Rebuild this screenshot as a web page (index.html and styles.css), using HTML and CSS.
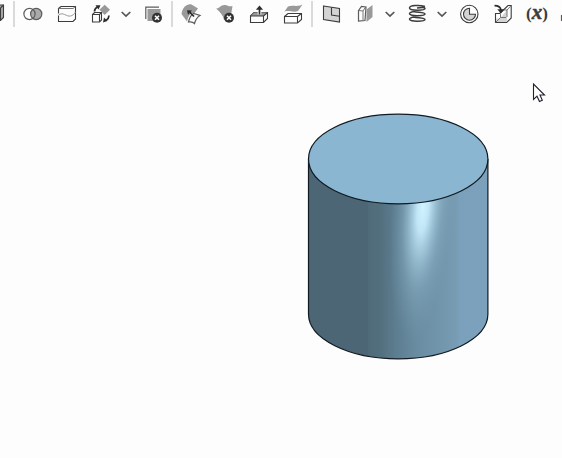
FILE: index.html
```
<!DOCTYPE html>
<html lang="en">
  <head>
    <meta charset="UTF-8" />
    <meta name="viewport" content="width=device-width, initial-scale=1.0" />
    <title>Part Studio</title>
    <link rel="stylesheet" href="styles.css">
  </head>
  <body>
    <div class="toolbar">
      <svg class="icon" viewBox="0 0 34 28">
        <path class="mid line" d="M10 8l3-3h12.500v12.500l-3 3H10z" />
        <path class="line none" d="M22.500 20.500V8l3-3" />
      </svg>
      <span class="separator"></span>
      <!-- boolean -->
      <svg class="icon" viewBox="0 0 34 28">
        <circle class="mid" cx="20.200" cy="14" r="5.800" />
        <circle class="soft none" cx="13.500" cy="14" r="5.600" />
        <circle class="soft none" cx="20.200" cy="14" r="5.600" />
      </svg>
      <!-- split -->
      <svg class="icon" viewBox="0 0 34 28">
        <path class="line white" d="M8.500 8.500l2.500-2h14.500v12.500l-2.500 2.500H8.500z" />
        <path class="soft-thin none" d="M8.500 8.500H23l2.500-2" />
        <path class="white" d="M22.300 9h1.400v4h-1.400zM7.700 13.500h1.600v2H7.700z" />
        <path class="pale" d="M8.500 15c4.500-3.500 8 2 12 1 2-.500 3.500-1.500 5-4" />
      </svg>
      <!-- transform -->
      <svg class="icon" viewBox="0 0 34 28">
        <path class="line white" d="M8.500 14.500l2-2h7v7.500l-2 2h-7z" />
        <path class="line none" d="M8.500 14.500h7v7.500M15.500 14.500l2-2" />
        <path class="gray" d="M20.700 4.700l5.300 5-5.300 5.300-5.300-5.300z" />
        <path class="dark none" d="M10.500 11.500c0-2 1-3.500 3-4.500M25 15.500c0 2-1 3.500-3 5" />
        <path class="black" d="M11.500 5.200h5l-2 4.300zM19 22.500l1-5 3.300 3.500z" />
      </svg>
      <svg class="chevron" viewBox="0 0 18 28"><path d="M3.700 12l4.300 4 4.300-4" /></svg>
      <!-- delete part -->
      <svg class="icon" viewBox="0 0 34 28">
        <path class="soft none" d="M9.800 19V7.200H23" />
        <path class="gray" d="M11.500 9H24.500v12H11.500z" />
        <circle class="badge" cx="21" cy="17.700" r="5" />
        <path class="cross" d="M19 15.700l4 4M23 15.700l-4 4" />
      </svg>
      <span class="separator"></span>
      <!-- modify fillet -->
      <svg class="icon" viewBox="0 0 34 28">
        <path class="gray" d="M7.500 14C8.500 7 13 3.500 17.500 4.500L24 8.500l-3.500 4.500c-5 0-6 3-7.500 8.500z" />
        <path class="soft white" d="M14.500 22c1-4.500 2.500-7 5-8.500l6.500 2c-2.500 1.500-4.500 4-5.500 8-1.500-1.500-3.500-2-6-1.500z" />
        <path class="dark none" d="M20 16.500l-4.500-4.500" />
        <path class="black" d="M13 10.200l5 .300-4 4.200z" />
      </svg>
      <!-- delete face -->
      <svg class="icon" viewBox="0 0 34 28">
        <path class="gray" d="M8 8.500c3.500 0 5-4 9-3.500 3 .500 4 2 7.500 1L23 15l-7 5c-1-5-4-8-8-11.500z" />
        <circle class="badge" cx="21" cy="17.700" r="5" />
        <path class="cross" d="M19 15.700l4 4M23 15.700l-4 4" />
      </svg>
      <!-- move face -->
      <svg class="icon" viewBox="0 0 34 28">
        <path class="line white" d="M8.500 16l3.500-3.500h13.500v6l-4 4h-13z" />
        <path class="gray" d="M9 16l3.500-3.500h13l-4 3.500z" />
        <path class="line none" d="M8.500 16h13v6.500M21.500 16l4-3.500" />
        <path class="halo none" d="M17.500 14.500V8" />
        <path class="dark none" d="M17.500 14.500V8" />
        <path class="black" d="M17.500 5.500l3.600 4.300h-7.200z" />
      </svg>
      <!-- replace face -->
      <svg class="icon" viewBox="0 0 34 28">
        <path class="gray" d="M8.500 11.500l3.500-5c5-2 8 1 14.500-2l-4.500 6.500c-5 2-9-1-13.500.500z" />
        <path class="line white" d="M8.500 16.500l3.500-3h13.500v6l-4 3.500h-13z" />
        <path class="line none" d="M8.500 16.500h13V23M21.500 16.500l4-3" />
      </svg>
      <span class="separator"></span>
      <!-- plane -->
      <svg class="icon" viewBox="0 0 34 28">
        <path class="line light" d="M9.500 6l16 2.500v13.500l-16-2.500z" />
        <path class="line none" d="M17.500 7.500v7.500l8 1.200" />
      </svg>
      <!-- mirror -->
      <svg class="icon" viewBox="0 0 34 28">
        <path class="soft white" d="M10.500 10.500l3-4 4.500.500-1 13.500-6.500.500z" />
        <path class="soft-thin none" d="M10.500 10.500l4.500.500 2.500-4M15 11v9.500" />
        <path class="gray" d="M18.500 9.500l6-4.500v12l-6 5z" />
      </svg>
      <svg class="chevron" viewBox="0 0 18 28"><path d="M3.700 12l4.300 4 4.300-4" /></svg>
      <!-- helix -->
      <svg class="icon" viewBox="0 0 34 28">
        <path class="coil" d="M25 6.500C20 5 9.500 5 9.500 8s15.500 2.500 15.500.500c0-1.500-5-1-8-.500M14 11.500c-3 .500-4.500 1-4.500 2.300 0 2.700 15.500 2.200 15.500.200 0-1.500-8-1.500-11-2.500M14 17c-3 .500-4.500 1-4.500 2.300 0 2.700 15.500 2.200 15.500.200 0-1.500-8-1.500-11-2.500" />
      </svg>
      <svg class="chevron" viewBox="0 0 18 28"><path d="M3.700 12l4.300 4 4.300-4" /></svg>
      <!-- measure -->
      <svg class="icon" viewBox="0 0 34 28">
        <circle class="line white" cx="17.300" cy="14" r="8.700" />
        <path class="line light" d="M17.500 8.200v6h6a6 6 0 1 1-6-6z" />
      </svg>
      <!-- derived -->
      <svg class="icon" viewBox="0 0 34 28">
        <path class="line white" d="M9.500 13.500h4l4-3.500 4.500-4.500h3.200v12.500l-4.500 4.500H9.500z" />
        <path class="light" d="M10 18.500h4l7-8.500v12H10z" />
        <path class="soft-thin none" d="M9.500 22.500l5-5h5.500M14.500 17.500v-4M21 10v7M21 10l4.200-4.500M17 10h4" />
        <path class="dark none" d="M8.500 5.700c4 0 6 1 6.500 4.500" />
        <path class="black" d="M11.300 9.200h7l-3.300 4.300z" />
      </svg>
      <span class="variable">(<i>x</i>)</span>
      <svg class="icon" viewBox="0 0 34 28">
        <path class="soft none" d="M7.500 15.500h10v5h-10z" />
      </svg>
    </div>

    <div class="viewport">
      <svg class="model" viewBox="0 0 184 250">
        <defs>
          <linearGradient id="side" gradientUnits="userSpaceOnUse" x1="2" y1="0" x2="182" y2="0">
            <stop offset="0" stop-color="#4d6675" />
            <stop offset=".33" stop-color="#4d6675" />
            <stop offset=".34" stop-color="#506c7a" />
            <stop offset=".4" stop-color="#526f7e" />
            <stop offset=".48" stop-color="#5c7c8f" />
            <stop offset=".6" stop-color="#698ca1" />
            <stop offset=".74" stop-color="#7296ac" />
            <stop offset=".83" stop-color="#779cb4" />
            <stop offset=".84" stop-color="#7ba0bb" />
            <stop offset="1" stop-color="#7ca1bd" />
          </linearGradient>
          <radialGradient id="shine" gradientUnits="userSpaceOnUse" cx="0" cy="0" r="1" gradientTransform="translate(117 95) rotate(5) scale(32 136)">
            <stop offset="0" stop-color="#d0f3ff" />
            <stop offset=".18" stop-color="#c8edfd" stop-opacity=".92" />
            <stop offset=".38" stop-color="#b0d8eb" stop-opacity=".65" />
            <stop offset=".62" stop-color="#93b9cd" stop-opacity=".35" />
            <stop offset="1" stop-color="#789eb2" stop-opacity="0" />
          </radialGradient>
        </defs>
        <path fill="url(#side)" d="M2.500 47v155a89.700 44.800 0 0 0 179.400 0V47z" />
        <path fill="url(#shine)" d="M2.500 47v155a89.700 44.800 0 0 0 179.400 0V47z" />
        <path class="edge" d="M2.500 47v155a89.700 44.800 0 0 0 179.400 0V47" />
        <ellipse class="edge cap" cx="92.200" cy="47" rx="89.700" ry="44.800" />
      </svg>
      <svg class="cursor" viewBox="0 0 14 20">
        <path d="M1.500 1v15.500l3.500-3.300 2.500 5.300 2.800-1.200-2.300-5.300h4.500z" />
      </svg>
    </div>
  </body>
</html>
```
FILE: styles.css
```
body {
  margin: 0;
  height: 458px;
  overflow: hidden;
  background: #fdfdfd;
}
.toolbar {
  display: flex;
  height: 28px;
  margin-left: -22px;
}
.icon {
  flex: none;
  width: 34px;
  height: 28px;
}
.chevron {
  flex: none;
  width: 18px;
  height: 28px;
}
.chevron path {
  fill: none;
  stroke: #555;
  stroke-width: 1.7;
}
.separator {
  flex: none;
  width: 2px;
  height: 26px;
  margin: 1px 1px 0;
  background: #dadada;
}

/* icon parts */
.line {
  stroke: #3c3c3c;
  stroke-width: 1.1;
}
.soft {
  stroke: #5c5c5c;
  stroke-width: 1.2;
}
.soft-thin {
  stroke: #666;
  stroke-width: 0.9;
}
.pale {
  fill: none;
  stroke: #999;
}
.dark {
  stroke: #2c2c2c;
  stroke-width: 1.7;
}
.halo {
  stroke: #fdfdfd;
  stroke-width: 3.6;
}
.white {
  fill: #fdfdfd;
}
.light {
  fill: #d4d4d4;
}
.mid {
  fill: #aaa;
}
.gray {
  fill: #999;
}
.black {
  fill: #2c2c2c;
}
.none {
  fill: none;
}
.badge {
  fill: #333;
}
.cross {
  stroke: #fff;
  stroke-width: 1.6;
}
.coil {
  fill: none;
  stroke: #3c3c3c;
  stroke-width: 1.5;
}
.variable {
  flex: none;
  width: 34px;
  font: bold 17px/25px "Liberation Serif", serif;
  text-align: center;
  color: #3c3c3c;
}
.variable i {
  font-size: 21px;
  -webkit-text-stroke: 0.5px #3c3c3c;
}

/* 3D view */
.viewport {
  position: relative;
  height: 430px;
}
.model {
  display: block;
  width: 184px;
  height: 250px;
  margin-left: 306px;
  padding-top: 84px;
}
.edge {
  fill: none;
  stroke: #101a20;
  stroke-width: 1.2;
}
.cap {
  fill: #8ab6d2;
}
.cursor {
  position: absolute;
  left: 532px;
  top: 55px;
  width: 14px;
  height: 20px;
}
.cursor path {
  fill: #fff;
  stroke: #222230;
  stroke-width: 1.1;
}
```
